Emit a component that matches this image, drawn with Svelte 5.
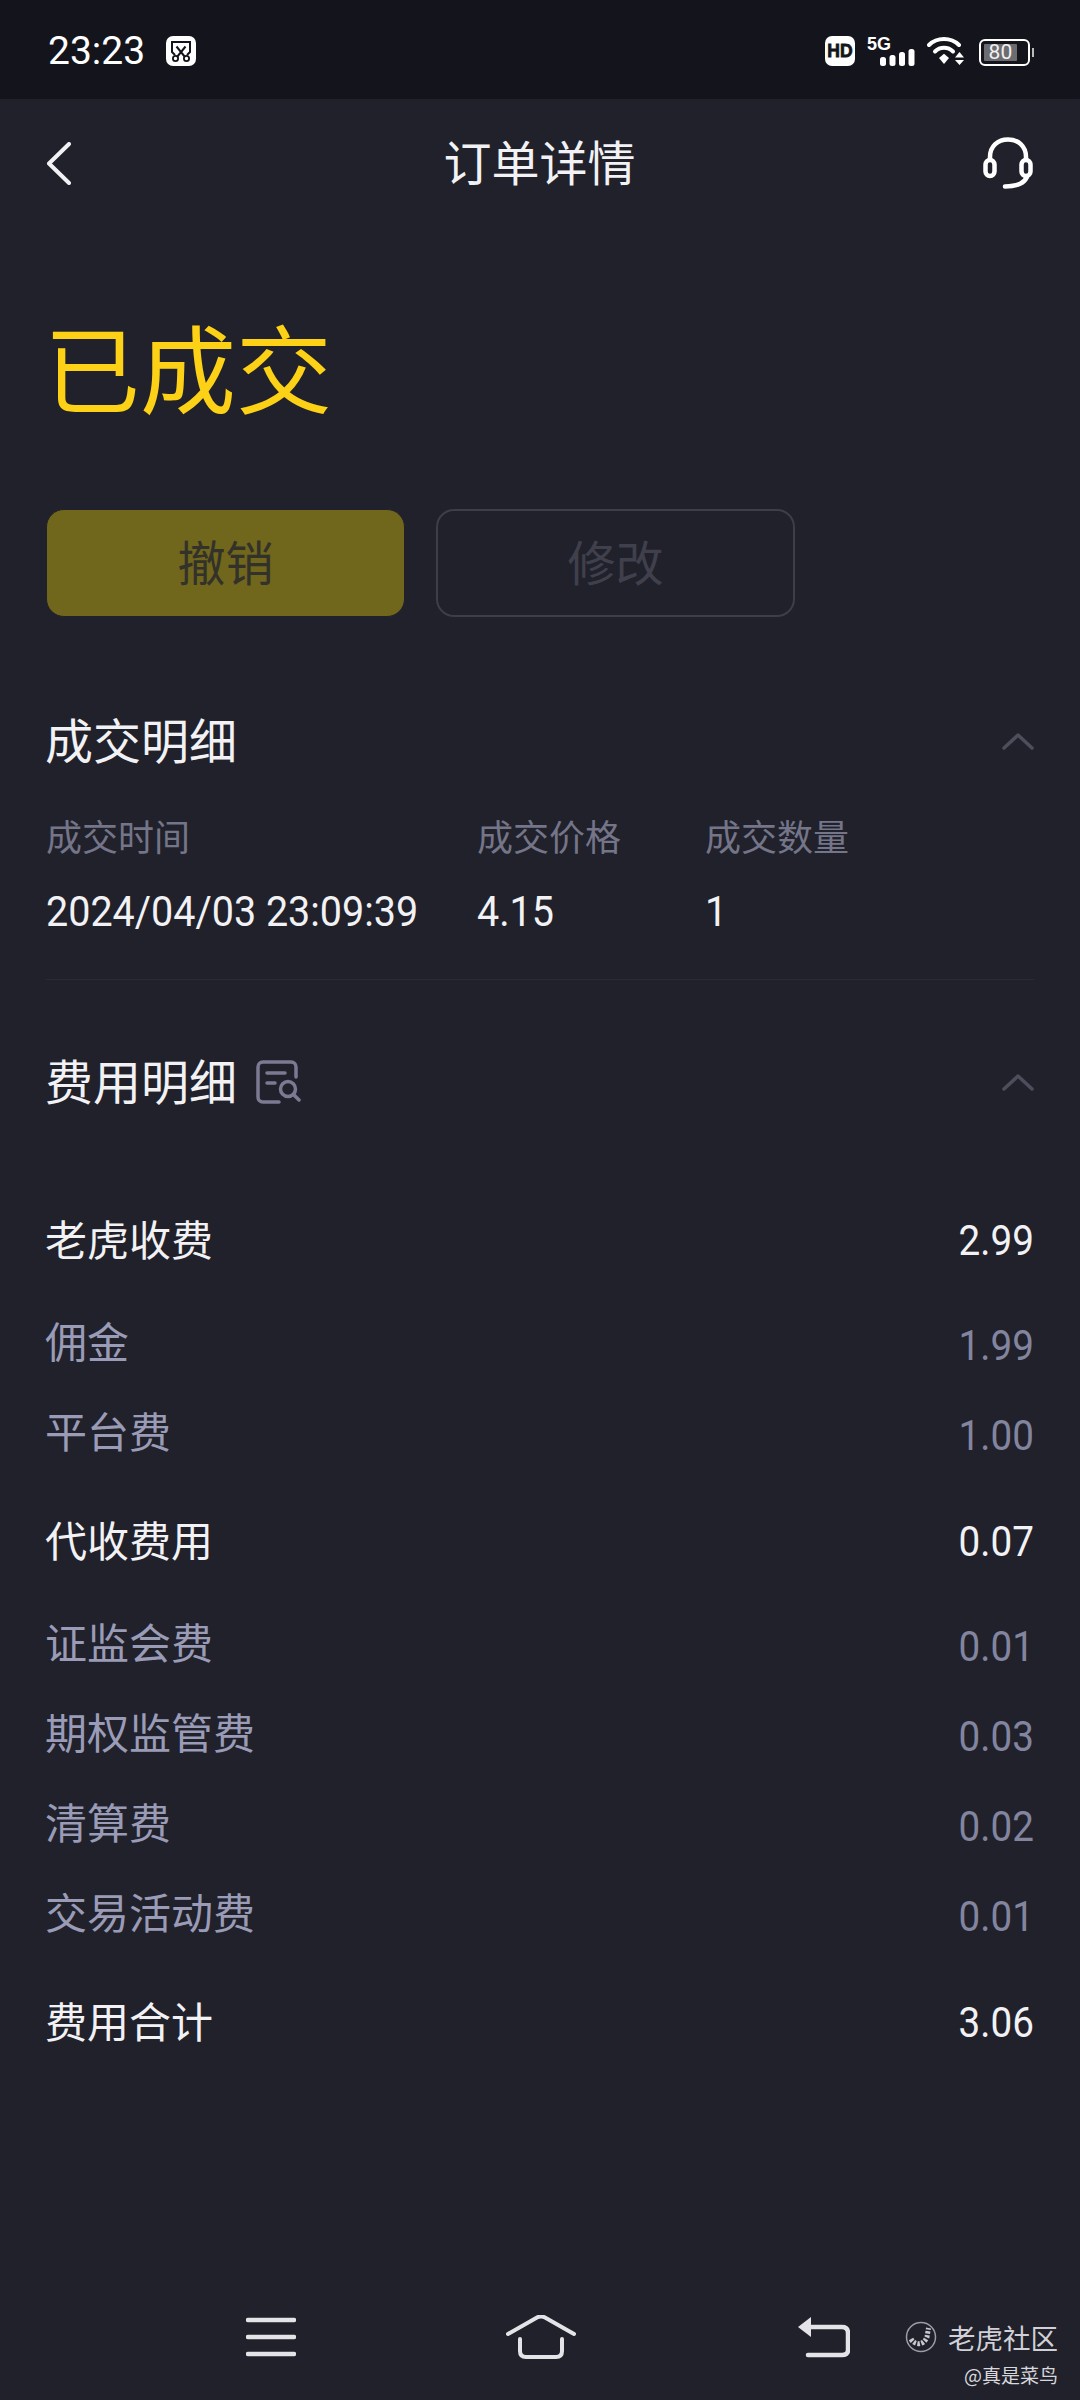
<script>
  const trade = [
    { label: '成交时间', value: '2024/04/03 23:09:39' },
    { label: '成交价格', value: '4.15' },
    { label: '成交数量', value: '1' }
  ];

  const feeGroups = [
    {
      name: '老虎收费',
      total: '2.99',
      items: [
        { name: '佣金', value: '1.99' },
        { name: '平台费', value: '1.00' }
      ]
    },
    {
      name: '代收费用',
      total: '0.07',
      items: [
        { name: '证监会费', value: '0.01' },
        { name: '期权监管费', value: '0.03' },
        { name: '清算费', value: '0.02' },
        { name: '交易活动费', value: '0.01' }
      ]
    },
    { name: '费用合计', total: '3.06', items: [] }
  ];
</script>

<div class="page">
  <header class="status">
    <div class="status-left">
      <span class="clock">23:23</span>
      <svg class="scissors" width="30" height="30" viewBox="0 0 30 30">
        <rect width="30" height="30" rx="7" fill="#fff" />
        <path d="M9 19 L6 16 V6 H24 V16 L21 19" fill="none" stroke="#14151c" stroke-width="2" />
        <path d="M10.500 10.500 L19 21 M19.500 10.500 L11 21" fill="none" stroke="#14151c" stroke-width="2" />
        <circle cx="9.500" cy="22.500" r="2.600" fill="none" stroke="#14151c" stroke-width="1.800" />
        <circle cx="20.500" cy="22.500" r="2.600" fill="none" stroke="#14151c" stroke-width="1.800" />
      </svg>
    </div>
    <div class="status-right">
      <svg class="glyph" width="30" height="30" viewBox="0 0 30 30">
        <rect width="30" height="30" rx="7" fill="#fff" />
        <text x="15" y="21" text-anchor="middle" class="hd">HD</text>
      </svg>
      <svg class="glyph" width="48" height="30" viewBox="0 0 48 30">
        <text x="0" y="14" class="five-g">5G</text>
        <rect x="13" y="21" width="6" height="9" rx="2.500" fill="#fff" />
        <rect x="22.500" y="19" width="6" height="11" rx="2.500" fill="#fff" />
        <rect x="32" y="16" width="6" height="14" rx="2.500" fill="#fff" />
        <rect x="41.500" y="13" width="6" height="17" rx="2.500" fill="#fff" />
      </svg>
      <svg class="wifi" width="38" height="30" viewBox="0 0 38 30">
        <path d="M2 9 C10 1 24 1 32 9" fill="none" stroke="#fff" stroke-width="4" stroke-linecap="round" />
        <path d="M8 15.500 C13 10.500 21 10.500 26 15.500" fill="none" stroke="#fff" stroke-width="4" stroke-linecap="round" />
        <path d="M12 22 L17 17.800 L22 22 L17 28 Z" fill="#fff" />
        <path d="M32.500 16 L37 21.500 H28 Z M28 24 H37 L32.500 29 Z" fill="#fff" />
      </svg>
      <div class="battery">
        <div class="cell"><span>80</span></div>
      </div>
    </div>
  </header>

  <nav class="titlebar">
    <svg width="25" height="43" viewBox="0 0 25 43">
      <path d="M23 2 L3 21.500 L23 41" fill="none" stroke="#f2f2f5" stroke-width="4" stroke-linecap="round" stroke-linejoin="round" />
    </svg>
    <h1>订单详情</h1>
    <svg class="support" width="50" height="52" viewBox="0 0 50 52">
      <path d="M7 22 V20 C7 9 15 2.500 25 2.500 C35 2.500 43 9 43 20 V22" fill="none" stroke="#fff" stroke-width="4.500" />
      <rect x="2.500" y="23" width="9" height="16" rx="4.500" fill="none" stroke="#fff" stroke-width="4.500" />
      <rect x="38.500" y="23" width="9" height="16" rx="4.500" fill="none" stroke="#fff" stroke-width="4.500" />
      <path d="M44 40 C41 46 36 49 22 49.500" fill="none" stroke="#fff" stroke-width="4.500" stroke-linecap="round" />
    </svg>
  </nav>

  <main class="content">
    <div class="state">已成交</div>

    <div class="actions">
      <button type="button" class="btn btn-cancel"><span>撤销</span></button>
      <button type="button" class="btn btn-edit"><span>修改</span></button>
    </div>

    <section class="trade">
      <div class="section-head">
        <h2>成交明细</h2>
        <svg class="chevron" width="32" height="18" viewBox="0 0 32 18">
          <path d="M2 16 L16 3 L30 16" fill="none" stroke="#4c4e5c" stroke-width="3.500" stroke-linecap="round" stroke-linejoin="round" />
        </svg>
      </div>
      <div class="trade-grid">
        {#each trade as cell}
          <div class="trade-label">{cell.label}</div>
        {/each}
        {#each trade as cell}
          <div class="trade-value">{cell.value}</div>
        {/each}
      </div>
    </section>

    <section class="fees">
      <div class="section-head">
        <div class="head-left">
          <h2>费用明细</h2>
          <svg width="46" height="46" viewBox="0 0 46 46">
            <path d="M24 43 H8 C5 43 3 41 3 38 V8 C3 5 5 3 8 3 H36 C39 3 41 5 41 8 V18" fill="none" stroke="#7a7b92" stroke-width="3.500" stroke-linecap="round" />
            <path d="M12 14 H30 M12 24 H20" fill="none" stroke="#7a7b92" stroke-width="3.500" stroke-linecap="round" />
            <circle cx="33" cy="30" r="7.500" fill="none" stroke="#7a7b92" stroke-width="3.500" />
            <path d="M39 36 L44 41" fill="none" stroke="#7a7b92" stroke-width="3.500" stroke-linecap="round" />
          </svg>
        </div>
        <svg class="chevron" width="32" height="18" viewBox="0 0 32 18">
          <path d="M2 16 L16 3 L30 16" fill="none" stroke="#4c4e5c" stroke-width="3.500" stroke-linecap="round" stroke-linejoin="round" />
        </svg>
      </div>

      {#each feeGroups as group}
        <div class="fee-group">
          <div class="fee-row main">
            <span class="name">{group.name}</span>
            <span class="num">{group.total}</span>
          </div>
          {#if group.items.length}
            <div class="fee-items">
              {#each group.items as item}
                <div class="fee-row sub">
                  <span class="name">{item.name}</span>
                  <span class="num">{item.value}</span>
                </div>
              {/each}
            </div>
          {/if}
        </div>
      {/each}
    </section>
  </main>

  <footer class="softkeys">
    <svg width="50" height="40" viewBox="0 0 50 40">
      <path d="M2 3 H48 M2 20 H48 M2 37 H48" fill="none" stroke="#e4e4e8" stroke-width="4.500" stroke-linecap="round" />
    </svg>
    <svg width="70" height="44" viewBox="0 0 70 44">
      <path d="M2 19 L31 2.500 Q35 0.500 39 2.500 L68 19" fill="none" stroke="#e4e4e8" stroke-width="4" stroke-linecap="round" />
      <path d="M14 24 V36 Q14 42 20 42 H50 Q56 42 56 36 V24" fill="none" stroke="#e4e4e8" stroke-width="4" stroke-linecap="round" />
    </svg>
    <svg width="52" height="42" viewBox="0 0 52 42">
      <path d="M0 11 L13 1 V21 Z" fill="#e4e4e8" />
      <path d="M10 11 H44 Q50 11 50 17 V34 Q50 39 44 39 H10" fill="none" stroke="#e4e4e8" stroke-width="4.500" stroke-linecap="round" />
    </svg>
  </footer>

  <div class="watermark">
    <div class="wm-top">
      <svg width="32" height="32" viewBox="0 0 32 32">
        <circle cx="16" cy="16" r="14.500" fill="none" stroke="#9b9ca5" stroke-width="1.500" />
        <path d="M6 18 C10 25 19 24 22 16 L23.500 7" fill="none" stroke="#c9c9cf" stroke-width="5" stroke-dasharray="2.500 1.500" />
      </svg>
      <span>老虎社区</span>
    </div>
    <div class="wm-user">@真是菜鸟</div>
  </div>
</div>

<style>
  :global(body) {
    margin: 0;
    background: #20212b;
  }

  .page {
    position: relative;
    width: 1080px;
    height: 2400px;
    display: flex;
    flex-direction: column;
    overflow: hidden;
    background: #20212b;
    color: #f2f2f5;
    font-family: "Noto Sans CJK SC", "Noto Sans", sans-serif;
  }

  .status {
    height: 99px;
    flex: none;
    box-sizing: border-box;
    padding: 36px 47px 0 48px;
    display: flex;
    justify-content: space-between;
    align-items: flex-start;
    background: #14151c;
  }

  .status-left {
    display: flex;
    align-items: center;
    gap: 21px;
  }

  .clock {
    font-family: Roboto, sans-serif;
    font-size: 39px;
    line-height: 30px;
    color: #fff;
  }

  .status-right {
    display: flex;
    align-items: flex-start;
    gap: 12px;
  }

  .glyph {
    overflow: visible;
  }

  .status-right text {
    font-family: "Liberation Sans", sans-serif;
    font-weight: 700;
    fill: #fff;
  }

  .status-right .hd {
    font-size: 17.500px;
    fill: #14151c;
    stroke: #14151c;
    stroke-width: 0.8px;
  }

  .status-right .five-g {
    font-size: 18px;
  }

  .battery {
    position: relative;
    width: 51px;
    height: 27px;
    margin: 3px 3px 0 2px;
    box-sizing: border-box;
    border: 2.500px solid #fff;
    border-radius: 6px;
    padding: 3px;
  }

  .battery::after {
    content: "";
    position: absolute;
    right: -6px;
    top: 7px;
    width: 2px;
    height: 9px;
    background: #bbb;
  }

  .cell {
    width: 80%;
    height: 100%;
    border-radius: 1px;
    background: #6c6c70;
    display: flex;
    align-items: center;
    justify-content: center;
  }

  .cell span {
    font-family: Roboto, sans-serif;
    font-size: 21px;
    line-height: 1;
    color: #f0f0f0;
  }

  .titlebar {
    height: 128px;
    flex: none;
    box-sizing: border-box;
    padding: 0 47px 0 46px;
    display: grid;
    grid-template-columns: 1fr auto 1fr;
    align-items: center;
  }

  .support {
    justify-self: end;
  }

  .titlebar h1 {
    margin: 0;
    padding-bottom: 6px;
    font-size: 48px;
    font-weight: 400;
    line-height: 60px;
  }

  .content {
    flex: 1;
    padding: 0 46px;
  }

  .state {
    margin: 73px 0 0 -2px;
    height: 130px;
    font-size: 96px;
    line-height: 130px;
    color: #fcd116;
  }

  .actions {
    margin-top: 79px;
    display: flex;
    gap: 31px;
  }

  .btn {
    width: 359px;
    height: 108px;
    box-sizing: border-box;
    border-radius: 18px;
    font-family: inherit;
    font-size: 48px;
    padding: 0 0 6px;
  }

  .btn-cancel {
    border: 1px solid #20212b;
    background: #70661c;
    color: #33322a;
  }

  .btn-edit {
    border: 2px solid #3d3e4a;
    background: transparent;
    color: #3f404c;
  }

  .section-head {
    height: 80px;
    display: flex;
    align-items: center;
    justify-content: space-between;
  }

  .section-head h2 {
    margin: 0 0 0 -1px;
    padding-bottom: 6px;
    font-size: 48px;
    font-weight: 400;
    line-height: 60px;
  }

  .head-left {
    display: flex;
    align-items: center;
    gap: 18px;
  }

  .trade {
    margin-top: 84px;
    padding-bottom: 42px;
    border-bottom: 1px solid #2a2b36;
  }

  .trade-grid {
    margin-top: 34px;
    display: grid;
    grid-template-columns: 431px 228px 1fr;
    grid-template-rows: 40px 50px;
    row-gap: 32px;
  }

  .trade-label {
    font-size: 36px;
    line-height: 40px;
    color: #747588;
  }

  .trade-value,
  .num {
    font-family: Roboto, sans-serif;
    display: inline-block;
  }

  .trade-value {
    font-size: 42px;
    line-height: 50px;
    white-space: nowrap;
    transform: scaleX(0.94);
    transform-origin: left center;
  }

  .fees {
    margin-top: 62px;
  }

  .fee-group {
    margin-top: 49px;
  }

  .section-head + .fee-group {
    margin-top: 89px;
  }

  .fee-items {
    margin-top: 42px;
    display: flex;
    flex-direction: column;
    gap: 30px;
  }

  .fee-row {
    height: 60px;
    display: flex;
    align-items: center;
    justify-content: space-between;
    font-size: 42px;
    line-height: 60px;
  }

  .name {
    margin-left: -1px;
    padding-bottom: 6px;
  }

  .fee-row .num {
    font-size: 42px;
    transform: scaleX(0.92);
    transform-origin: right center;
  }

  .sub {
    color: #9a9bb6;
  }

  .sub .num {
    padding-top: 6px;
    color: #83859f;
  }

  .softkeys {
    height: 130px;
    flex: none;
    box-sizing: border-box;
    padding: 3px 0 0 246px;
    display: flex;
    align-items: center;
    gap: 210px;
  }

  .softkeys svg:last-child {
    margin-left: 12px;
  }

  .watermark {
    position: absolute;
    right: 22px;
    bottom: 13px;
    display: flex;
    flex-direction: column;
    align-items: flex-end;
    gap: 10px;
  }

  .wm-top {
    display: flex;
    align-items: center;
    gap: 11px;
    font-size: 27.500px;
    line-height: 32px;
    color: #d0d0d6;
  }

  .wm-user {
    font-size: 19px;
    line-height: 24px;
    color: #d8d8dc;
  }
</style>
